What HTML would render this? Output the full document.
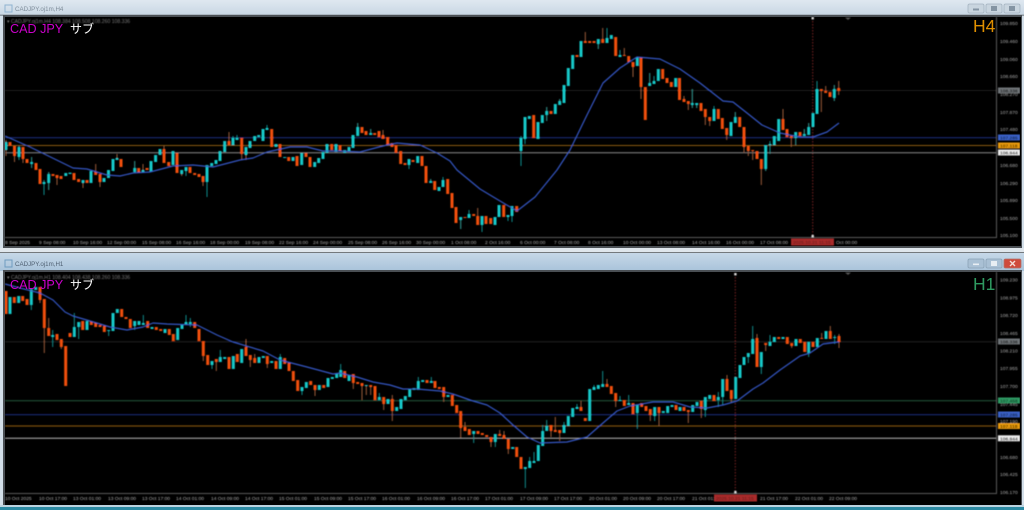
<!DOCTYPE html>
<html><head><meta charset="utf-8"><style>
html,body{margin:0;padding:0;background:#000;width:1024px;height:510px;overflow:hidden}
svg{display:block}
text{font-family:"Liberation Sans","Noto Sans CJK JP",sans-serif}
.ax text,.dt text{font-size:4.9px;fill:#aaa}
.lb{font-size:4.9px;font-weight:bold}
</style></head><body>
<svg width="1024" height="510" viewBox="0 0 1024 510" xmlns="http://www.w3.org/2000/svg">
<defs>
<linearGradient id="tb" x1="0" y1="0" x2="0" y2="1"><stop offset="0" stop-color="#dfe8f0"/><stop offset="1" stop-color="#c9d7e4"/></linearGradient>
<linearGradient id="tb2" x1="0" y1="0" x2="0" y2="1"><stop offset="0" stop-color="#c6d8e8"/><stop offset="1" stop-color="#a9c3da"/></linearGradient>
<filter id="b" x="0" y="0" width="100%" height="100%"><feGaussianBlur stdDeviation="0.42"/></filter>
</defs>
<rect width="1024" height="510" fill="#d3dfe9"/>
<!-- top window -->
<rect x="0" y="0" width="1024" height="15" fill="url(#tb)"/>
<rect x="0" y="14.5" width="1024" height="1.5" fill="#8e979f"/>
<rect x="3" y="15" width="1019" height="233" fill="#4a4f54"/>
<rect x="5" y="17" width="1016" height="229" fill="#000"/>
<rect x="0" y="248" width="1024" height="4" fill="#dfe6ec"/>
<!-- bottom window -->
<rect x="0" y="252" width="1024" height="1.2" fill="#74797d"/>
<rect x="0" y="253" width="1024" height="18" fill="url(#tb2)"/>
<rect x="3" y="270" width="1019" height="236" fill="#4a4f54"/>
<rect x="5" y="272" width="1016" height="233" fill="#000"/>
<rect x="0" y="505" width="1024" height="2" fill="#bcd3e0"/>
<rect x="0" y="507" width="1024" height="3" fill="#2c8aa3"/>
<!-- titlebars -->
<rect x="5" y="5" width="7" height="7" fill="none" stroke="#8fb3d0" stroke-width="1"/>
<text x="15" y="11" font-size="6.2" fill="#7f8d9a">CADJPY.oj1m,H4</text>
<rect x="5" y="260" width="7" height="7" fill="none" stroke="#6f9cc0" stroke-width="1"/>
<text x="15" y="266" font-size="6.2" fill="#4e5f70">CADJPY.oj1m,H1</text>
<g fill="#c9d5df" stroke="#a5b4c1" stroke-width=".8">
<rect x="968" y="4" width="16" height="9" rx="1.5"/><rect x="986" y="4" width="16" height="9" rx="1.5"/><rect x="1004" y="4" width="16" height="9" rx="1.5"/>
</g>
<g fill="#8494a3"><rect x="973" y="8.5" width="6" height="2"/><rect x="991" y="6" width="6" height="5"/><rect x="1009" y="6" width="6" height="5"/></g>
<g fill="#a9c0d4" stroke="#8ba2b6" stroke-width=".8">
<rect x="968" y="259" width="16" height="9" rx="1.5"/><rect x="986" y="259" width="16" height="9" rx="1.5"/>
</g>
<rect x="1004" y="259" width="17" height="9" rx="1.5" fill="#cf4a3c" stroke="#b0716a" stroke-width=".8"/>
<g fill="#e8eef3"><rect x="973" y="263.5" width="6" height="1.6"/><rect x="991" y="261" width="6" height="5"/><path d="M1010 261l5 5m0-5l-5 5" stroke="#f4dcd8" stroke-width="1.4"/></g>

<g filter="url(#b)">
<!-- H4 chart -->
<g fill="none">
<path d="M5 90.5H996" stroke="#222" stroke-width="1"/>
<path d="M5 137.7H996" stroke="#1c2a72" stroke-width="1.2"/>
<path d="M5 145.5H996" stroke="#8a5a10" stroke-width="1"/>
<path d="M5 152.8H996" stroke="#8a8a8a" stroke-width="1"/>
<path d="M5 237.5H996.5V17" stroke="#5a5a5a" stroke-width="1"/>
<path d="M812.7 18V236" stroke="#7a2222" stroke-width="1" stroke-dasharray="1.5 1.5"/>
<path d="M6 140V156M14.5 146V162M23 147V163M31.6 157V168M44 180V195M48.7 172V190M57 175V185M83 180V188M95.7 164V175M100 174V187M117 154V160M134.7 161V173M143 164V172M164 146V163M181.7 170V176M186 167V176M203 176V186M207 165V197M229 132V145M233 136V145M237 135V140M241.7 138V160M246 147V160M267 125V130M357.7 123V136M370.7 129V135M383 130V139M409 159V169M430.7 179V183M439 187V191M443 177V187M460.7 217V229M469 210V218M477.7 208V225M482 216V232M508 215V221M512 206V222M521 136V166M525 117V144M546.7 107V121M559.7 99V105M585.3 32V43M598.3 39V49M602.7 28V43M607 28V43M620 50V57M624.3 48V56M633 62V77M641 57V99M649.7 73V86M654 76V84M684 96V102M688.3 101V110M692.3 89V108M696.7 103V108M705.3 109V125M709.7 117V126M714 106V121M726.7 128V140M735.3 112V123M744 127V153M748.3 146V156M752.7 150V160M761.3 159V185M765.7 145V171M770 141V154M783 109V130M791.3 136V147M795.7 132V145M804.3 129V136M808.7 123V135M817 81V114M821.3 89V112M825.7 86V93M834.3 85V101M838.7 81V95" stroke="#9a5a3a" stroke-width="1"/>
<path d="M19 146V160M31.6 157V168M44 180V195M48.7 172V190M134.7 161V173M186 167V176M207 165V197M233 136V145M237 135V140M267 125V130M357.7 123V136M370.7 129V135M409 159V169M430.7 179V183M443 177V187M460.7 217V229M469 210V218M482 216V232M508 215V221M512 206V222M521 136V166M525 117V144M546.7 107V121M559.7 99V105M598.3 39V49M607 28V43M620 50V57M649.7 73V86M654 76V84M692.3 89V108M696.7 103V108M714 106V121M735.3 112V123M765.7 145V171M770 141V154M795.7 132V145M804.3 129V136M808.7 123V135M817 81V114M834.3 85V101" stroke="#0d8b8b" stroke-width="1"/>
<path stroke="#16c9c9" stroke-width="3" d="M6 142V150M19 147V157M31.6 162V164M44 182V184M48.7 174V183M65.8 173V176M70 172.6V174M83 180V183M91 171V183M104 178V182M108.5 170V178M113 159V171M117 158V160M134.7 168V172M143 170V172M151 161V172M155.6 155V162M160 149V155M173 151V165M181.7 170V174M186 167V171M207 165V182M211.7 163V166M216 160V164M220 151V161M224.7 141V152M233 138V145M237 138V140M246 147V155M250 141V148M254.7 136V141M258.7 135V137M263 129V141M267 128V130M276 144V147M284.7 157V158M293 157V161M301.7 153V165M314.7 162V167M318.7 158V163M323 152V159M327 144V153M336 144V152M344.7 150V153M349 147V151M353 135V148M357.7 127V136M370.7 133V135M409 159V165M417.7 156V163M430.7 181V183M439 187V191M443 180V187M460.7 217V220M469 214V218M482 216V225M495 217V225M499 205V217M508 215V217M512 206V216M521 138V151M525 117V139M529.3 116V119M538 122V139M542.3 115V123M546.7 111V115M555.3 104V114M559.7 101V105M564 85V103M568.3 68V86M572.7 55V69M581 41V57M598.3 39V44M607 38V43M611.3 35V39M620 55V57M637.3 57V66M649.7 83V86M654 81V84M658.3 69V81M675.7 78V87M692.3 103V105M696.7 103V105M714 109V121M731 122V136M735.3 117V123M765.7 145V169M770 144V145M774.3 136V145M778.7 119V141M795.7 132V138M804.3 134V136M808.7 127V135M813 113V127M817 89V114M834.3 89V98"/>
<path stroke="#f2500a" stroke-width="3" d="M10 142V146M14.5 146V156M23 147V159M27 159V163M36 163V170M40 169V184M53 174V176M57 175V178M61 176V179M74 173V180M78.6 179V182M87 180V183M95.7 172V175M100 174V182M121 159V167M138.7 168V172M147 168V170M164 149V163M168.7 162V166M177 153V173M190 167V173M194.7 173V175M199 174V177M203 176V182M229 141V145M241.7 138V154M271.7 129V147M280 144V157M288.7 157V161M297 156V166M306 153V157M310 157V167M331.7 144V150M340 145V151M362 127V133M366 131V135M374.7 133V135M379 131V137M383 135V139M387.7 137V145M392 143V147M396 145V153M400.7 151V164M405 163V165M413 160V162M422 156V166M426 166V183M434.7 181V190M447.7 179V194M452 193V208M456 207V223M465 217V218M473.7 214V216M477.7 216V225M486 216V224M490.7 218V224M503.7 205V217M516.7 206V212M533.7 115V138M551 111V114M577 55V57M585.3 41V43M589.7 41V43M594 41V43M602.7 39V43M615.7 37V56M624.3 55V56M628.7 56V62M633 62V67M641 57V87M645.3 87V120M662.7 69V79M667 78V83M671.3 82V87M679.5 78V100M684 99V102M688.3 101V104M701 103V111M705.3 109V117M709.7 117V121M718.3 109V119M722.3 118V129M726.7 128V135M739.7 117V127M744 127V147M748.3 146V151M752.7 150V151M757 151V159M761.3 159V169M783 119V130M787 129V137M791.3 136V138M800 132V136M821.3 89V91M825.7 91V93M830 92V97M838.7 88V91"/>
<path stroke="#3557c4" stroke-width="1.2" stroke-linejoin="round" d="M5 136L30 147L73 168L87 169L107 175L120 176L133 173L150 172L173 166L193 165L213 167L240 160L253 158L267 152L290 147L307 147L323 151L340 151L360 152L387 145L397 143L420 145L437 153L450 161L457 170L480 189L500 201L517 211L535 197L557 170L570 150L587 115L603 83L620 68L637 57L660 59L680 69L700 83L723 101L733 102L747 113L762 125L780 133L800 137L813 137L827 132L839 123"/>
</g>
<rect x="811.5" y="17" width="2.4" height="2.4" fill="#ddd"/><rect x="811.5" y="235" width="2.4" height="2.4" fill="#ddd"/>
<path d="M845 17.5h6l-3 2.5z" fill="#555"/>
<text x="7" y="22.8" font-size="5.1" fill="#777">▾ CADJPY.oj1m,H4  108.384 108.508 108.260 108.336</text>
<g class="ax">
<text x="1000" y="25">109.850</text><text x="1000" y="43">109.460</text><text x="1000" y="61">109.060</text><text x="1000" y="78">108.660</text><text x="1000" y="96">108.270</text><text x="1000" y="114">107.870</text><text x="1000" y="131">107.480</text><text x="1000" y="167">106.680</text><text x="1000" y="185">106.290</text><text x="1000" y="202">105.890</text><text x="1000" y="220">105.500</text><text x="1000" y="237">105.100</text>
</g>
<g class="dt">
<text x="5" y="244">8 Sep 2025</text><text x="39" y="244">9 Sep 08:00</text><text x="73" y="244">10 Sep 16:00</text><text x="107" y="244">12 Sep 00:00</text><text x="142" y="244">15 Sep 08:00</text><text x="176" y="244">16 Sep 16:00</text><text x="210" y="244">18 Sep 00:00</text><text x="245" y="244">19 Sep 08:00</text><text x="279" y="244">22 Sep 16:00</text><text x="313" y="244">24 Sep 00:00</text><text x="348" y="244">25 Sep 08:00</text><text x="382" y="244">26 Sep 16:00</text><text x="416" y="244">30 Sep 00:00</text><text x="451" y="244">1 Oct 08:00</text><text x="485" y="244">2 Oct 16:00</text><text x="520" y="244">6 Oct 00:00</text><text x="554" y="244">7 Oct 08:00</text><text x="588" y="244">8 Oct 16:00</text><text x="623" y="244">10 Oct 00:00</text><text x="657" y="244">13 Oct 08:00</text><text x="692" y="244">14 Oct 16:00</text><text x="726" y="244">16 Oct 00:00</text><text x="760" y="244">17 Oct 08:00</text><text x="836" y="244">Oct 00:00</text>
</g>
<rect x="791" y="238.5" width="43" height="7" fill="#a82a2a"/>
<text x="793" y="244" font-size="4.9" fill="#5a1a1a">2025.10.21 11:15</text>
<rect x="998" y="87.5" width="22" height="6" fill="#6f7478"/><text class="lb" x="1000" y="92.6" fill="#222">108.336</text>
<rect x="998" y="134.5" width="22" height="6" fill="#3a62c8"/><text class="lb" x="1000" y="139.6" fill="#16264f">107.285</text>
<rect x="998" y="142.5" width="22" height="6" fill="#e89a08"/><text class="lb" x="1000" y="147.6" fill="#5a3a00">107.118</text>
<rect x="998" y="149.5" width="22" height="6" fill="#eee"/><text class="lb" x="1000" y="154.6" fill="#333">106.944</text>

<!-- H1 chart -->
<g fill="none">
<path d="M5 341.7H996" stroke="#222" stroke-width="1"/>
<path d="M5 400.7H996" stroke="#1f4f36" stroke-width="1.2"/>
<path d="M5 414.7H996" stroke="#1c2a72" stroke-width="1.2"/>
<path d="M5 426H996" stroke="#7a4d0c" stroke-width="1.2"/>
<path d="M5 438.3H996" stroke="#b8b8b8" stroke-width="1"/>
<path d="M5 493.5H996.5V272" stroke="#5a5a5a" stroke-width="1"/>
<path d="M735.3 274V492" stroke="#7a2222" stroke-width="1" stroke-dasharray="1.5 1.5"/>
<path stroke="#9a5a3a" stroke-width="1" d="M40 287V303M44.3 299V353M48.7 318V336M61.3 339V349M134.7 321V328M246 339V356M250.3 355V367M254.7 354V363M203.3 341V361M216.3 359V371M267.3 356V368M315 385V396M353.3 374V389M362 383V400M366.3 385V395M370.7 385V395M383.7 397V410M392.3 395V421M443.7 387V402M460.7 411V438M465 422V431M491 437V447M499.7 430V436M504 431V439M508.3 439V454M551 425V437M555.3 417V432M559.7 430V441M581 401V411M607 379V387M615.7 393V407M650.3 409V421M659 407V426M688.3 410V423M701.3 401V418M727 375V391M731.3 390V403M757 334V367M765.7 343V351M791.7 343V348M821.7 333V339M830.3 326V339M839 334V348"/>
<path stroke="#0d8b8b" stroke-width="1" d="M31.3 289V310M52.7 330V347M74.3 313V337M78.7 322V339M108.7 330V336M134.7 321V330M143.3 315V325M177.7 328V340M186 315V325M190.3 318V327M212 361V369M220.3 350V362M259 357V363M280.3 354V369M302 387V395M340.7 364V377M379.3 393V400M405.3 396V400M418.3 377V390M431.3 377V383M473.7 431V443M495.3 434V447M525.3 467V488M529.7 457V468M534 452V463M542.7 425V446M546.7 420V431M564 422V433M577 404V409M594 385V390M602.7 371V387M620 396V401M628.7 395V405M637.3 405V429M654.7 407V421M705.3 397V417M718.3 392V407M722.7 379V405M748.3 353V363M752.7 326V354M761.3 352V374M770 335V346M808.7 342V357M834.7 335V344"/>
<path stroke="#16c9c9" stroke-width="3" d="M10 297V314M18.7 296V303M31.3 289V305M35.7 287V290M52.7 335V337M74.3 327V337M78.7 322V327M87 321V330M108.7 330V331M113 313V331M117.3 309V313M134.7 321V326M139 321V325M143.3 323V325M152 327V329M165 329V333M177.7 328V340M182 325V329M186 322V325M190.3 322V324M212 361V365M220.3 357V362M224.7 357V359M233.3 356V369M241.7 349V363M259 357V363M263.3 356V358M271.7 361V363M280.3 357V369M302 387V391M306.3 382V388M319.3 385V390M328 378V387M332.3 377V379M336.7 374V378M340.7 370V377M349 375V381M366.3 385V386M379.3 397V400M388 399V404M396.7 407V411M401 399V409M405.3 396V400M409.7 389V397M414 388V390M418.3 381V390M422.7 380V382M431.3 381V383M448 395V397M473.7 431V434M495.3 434V442M512.7 447V449M525.3 467V469M529.7 461V468M534 461V463M538.3 445V461M542.7 431V446M546.7 426V431M564 425V433M568.3 416V426M572.7 408V417M577 407V409M589.7 389V421M594 387V390M598.3 385V389M602.7 384V387M620 400V401M628.7 403V405M637.3 405V413M654.7 407V416M663.3 411V413M667.7 406V413M672 405V407M680 407V411M692.7 405V412M697 402V406M705.3 397V410M709.7 395V399M718.3 397V400M722.7 379V397M735.7 377V399M740 365V378M744 357V365M748.3 353V357M752.7 339V354M761.3 352V367M770 342V346M774.3 337V342M783 337V339M796 339V346M808.7 342V353M817.3 338V347M826 331V339M834.7 337V338"/>
<path stroke="#f2500a" stroke-width="3" d="M6 291V314M14.3 297V303M22.7 296V301M27 299V305M40 287V300M44.3 299V328M48.7 328V336M57 334V340M61.3 339V347M65.7 346V386M70 333V337M82.7 321V330M91.3 321V325M95.7 323V327M100 325V327M104.3 326V332M121.7 309V317M126 317V319M130.3 319V328M147.7 321V328M156.3 327V330M160.7 329V331M169.3 329V335M173.3 334V341M194.7 322V328M199 329V341M203.3 341V356M207.7 355V365M216.3 359V362M229 357V369M237.3 354V362M246 347V356M250.3 355V360M254.7 358V363M267.3 356V364M276 361V369M284.7 358V364M289 363V371M293.3 371V381M297.7 380V391M310.7 381V385M315 385V390M323.7 385V388M344.7 371V378M353.3 374V383M357.7 382V384M362 383V386M370.7 385V387M375 386V400M383.7 397V404M392.3 399V411M427 380V383M435 381V388M439.3 387V389M443.7 387V397M452.3 395V406M456.7 405V413M460.7 411V428M465 427V431M469.3 429V435M478 431V434M482.3 433V435M486.7 435V437M491 437V442M499.7 434V436M504 435V439M508.3 439V449M516.7 447V457M521 457V469M551 425V431M555.3 430V432M559.7 430V433M581 407V411M585.3 418V421M607 384V387M611.3 386V394M615.7 393V401M624.3 400V406M633 403V414M641.7 403V407M646 406V411M650.3 409V415M659 407V413M676 405V410M684 407V411M688.3 410V412M701.3 401V409M714 395V401M727 379V391M731.3 390V399M757 338V367M765.7 343V345M778.7 337V339M787.3 337V344M791.7 343V346M800.3 339V343M804.7 342V352M813 342V347M821.7 338V339M830.3 331V339M839 336V342"/>
<path stroke="#3557c4" stroke-width="1.2" stroke-linejoin="round" d="M5 284L20 288L40 293L53 300L65 312L73 316L97 323L110 327L127 330L143 327L153 323L167 324L197 325L217 335L233 342L263 351L280 360L307 367L333 374L340 373L357 377L373 382L390 385L403 389L417 389L440 391L453 394L473 401L487 405L500 413L513 425L527 437L540 443L567 442L587 437L603 423L617 411L630 406L653 402L673 402L680 404L690 407L707 408L723 405L737 401L753 389L763 383L780 370L800 356L810 353L823 344L839 342"/>
</g>
<rect x="734.2" y="273" width="2.4" height="2.4" fill="#ddd"/><rect x="734.2" y="491" width="2.4" height="2.4" fill="#ddd"/>
<path d="M845 272.5h6l-3 2.5z" fill="#555"/>
<text x="7" y="278.8" font-size="5.1" fill="#777">▾ CADJPY.oj1m,H1  108.404 108.438 108.260 108.336</text>
<g class="ax">
<text x="1000" y="281.5">109.230</text><text x="1000" y="299.5">108.975</text><text x="1000" y="317">108.720</text><text x="1000" y="335">108.465</text><text x="1000" y="352.5">108.210</text><text x="1000" y="370">107.955</text><text x="1000" y="388">107.700</text><text x="1000" y="406">107.445</text><text x="1000" y="423">107.190</text><text x="1000" y="459">106.680</text><text x="1000" y="476">106.425</text><text x="1000" y="494">106.170</text>
</g>
<g class="dt">
<text x="5" y="500">10 Oct 2025</text><text x="39" y="500">10 Oct 17:00</text><text x="73" y="500">13 Oct 01:00</text><text x="108" y="500">13 Oct 09:00</text><text x="142" y="500">13 Oct 17:00</text><text x="176" y="500">14 Oct 01:00</text><text x="211" y="500">14 Oct 09:00</text><text x="245" y="500">14 Oct 17:00</text><text x="279" y="500">15 Oct 01:00</text><text x="314" y="500">15 Oct 09:00</text><text x="348" y="500">15 Oct 17:00</text><text x="382" y="500">16 Oct 01:00</text><text x="417" y="500">16 Oct 09:00</text><text x="451" y="500">16 Oct 17:00</text><text x="485" y="500">17 Oct 01:00</text><text x="520" y="500">17 Oct 09:00</text><text x="554" y="500">17 Oct 17:00</text><text x="589" y="500">20 Oct 01:00</text><text x="623" y="500">20 Oct 09:00</text><text x="657" y="500">20 Oct 17:00</text><text x="692" y="500">21 Oct 01:00</text><text x="760" y="500">21 Oct 17:00</text><text x="795" y="500">22 Oct 01:00</text><text x="829" y="500">22 Oct 09:00</text>
</g>
<rect x="714" y="494.5" width="43" height="7" fill="#a82a2a"/>
<text x="716" y="500" font-size="4.9" fill="#5a1a1a">2025.10.21 11:15</text>
<rect x="998" y="338.5" width="22" height="6" fill="#6f7478"/><text class="lb" x="1000" y="343.6" fill="#222">108.336</text>
<rect x="998" y="397.5" width="22" height="6" fill="#2f9a63"/><text class="lb" x="1000" y="402.6" fill="#124a2c">107.458</text>
<rect x="998" y="411.5" width="22" height="6" fill="#3a62c8"/><text class="lb" x="1000" y="416.6" fill="#16264f">107.285</text>
<rect x="998" y="423" width="22" height="6" fill="#e89a08"/><text class="lb" x="1000" y="428.1" fill="#5a3a00">107.118</text>
<rect x="998" y="435.3" width="22" height="6" fill="#eee"/><text class="lb" x="1000" y="440.4" fill="#333">106.944</text>
</g>
<!-- overlay labels kept sharp and bright -->
<text x="10" y="33" font-size="12.6" fill="#cc00cc">CAD JPY</text>
<text x="70" y="33" font-size="12" fill="#fff">サブ</text>
<text x="973" y="32" font-size="17.5" fill="#e09000">H4</text>
<text x="10" y="289" font-size="12.6" fill="#cc00cc">CAD JPY</text>
<text x="70" y="289" font-size="12" fill="#fff">サブ</text>
<text x="973" y="290" font-size="17.5" fill="#2e9a60">H1</text>
</svg>
</body></html>
